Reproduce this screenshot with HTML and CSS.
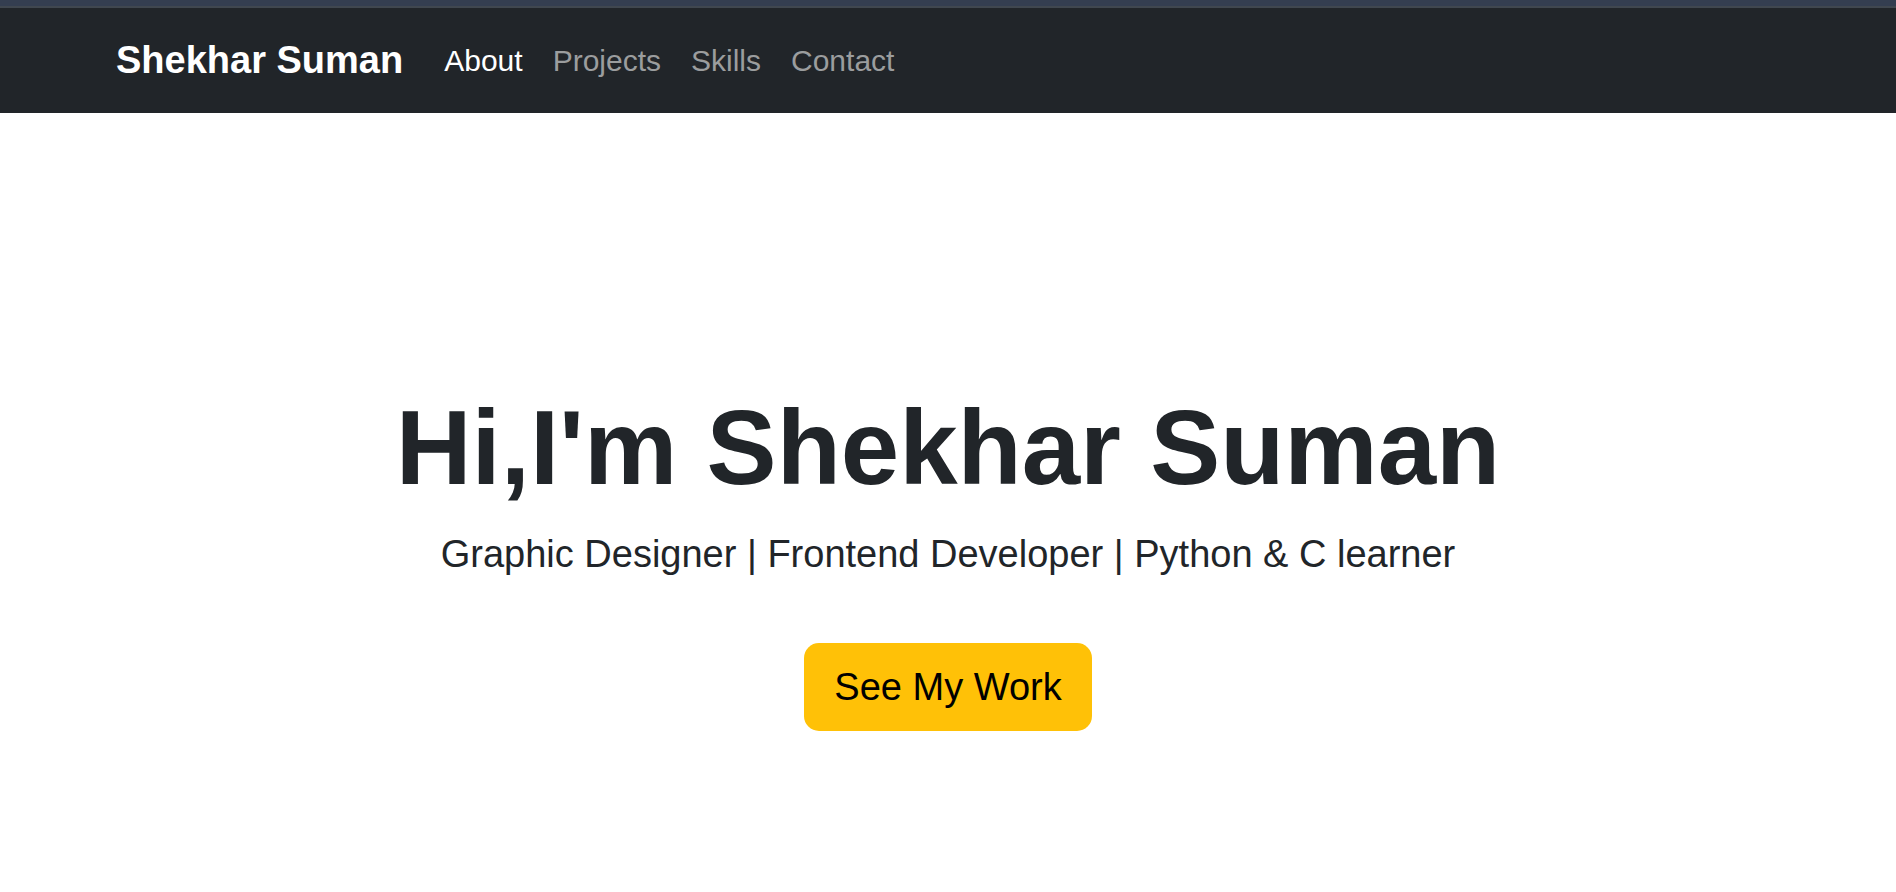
FILE: index.html
```html
<!DOCTYPE html>
<html lang="en">
<head>
<meta charset="utf-8">
<title>Shekhar Suman</title>
<link rel="stylesheet" href="styles.css">
</head>
<body>
<header class="navbar">
  <nav class="container">
    <a class="brand" href="#">Shekhar Suman</a>
    <ul class="nav-list">
      <li><a class="nav-link active" href="#about">About</a></li>
      <li><a class="nav-link" href="#projects">Projects</a></li>
      <li><a class="nav-link" href="#skills">Skills</a></li>
      <li><a class="nav-link" href="#contact">Contact</a></li>
    </ul>
  </nav>
</header>
<main class="hero">
  <h1 class="hero-title">Hi,I'm Shekhar Suman</h1>
  <p class="hero-lead">Graphic Designer | Frontend Developer | Python &amp; C learner</p>
  <a class="btn" href="#projects">See My Work</a>
</main>
</body>
</html>
```
FILE: styles.css
```css
* {
  box-sizing: border-box;
}

body {
  display: flex;
  flex-direction: column;
  min-height: 100vh;
  margin: 0;
  border-top: 6px solid #343e50;
  background: #fff;
  color: #212529;
  font-family: "Liberation Sans", Arial, sans-serif;
}

.navbar {
  border-top: 2px solid #40474f;
  background: #212529;
  padding: 15px 0;
}

.container {
  display: flex;
  align-items: center;
  gap: 26px;
  padding: 0 116px;
}

.brand {
  color: #fff;
  font-size: 38px;
  font-weight: 700;
  line-height: 75px;
  text-decoration: none;
}

.nav-list {
  display: flex;
  margin: 0;
  padding: 0;
  list-style: none;
}

.nav-link {
  display: block;
  padding: 15px;
  color: #9b9d9e;
  font-size: 30px;
  line-height: 45px;
  text-decoration: none;
}

.nav-link.active {
  color: #fff;
}

.hero {
  display: flex;
  flex: 1;
  flex-direction: column;
  align-items: center;
  justify-content: center;
  padding-top: 110px;
  text-align: center;
}

.hero-title {
  margin: 0 0 15px;
  font-size: 105px;
  line-height: 126px;
}

.hero-lead {
  margin: 0 0 60px;
  font-size: 38px;
  line-height: 57px;
}

.btn {
  padding: 16px 30px;
  border-radius: 15px;
  background: #ffc107;
  color: #000;
  font-size: 38px;
  line-height: 56px;
  text-decoration: none;
}
```
